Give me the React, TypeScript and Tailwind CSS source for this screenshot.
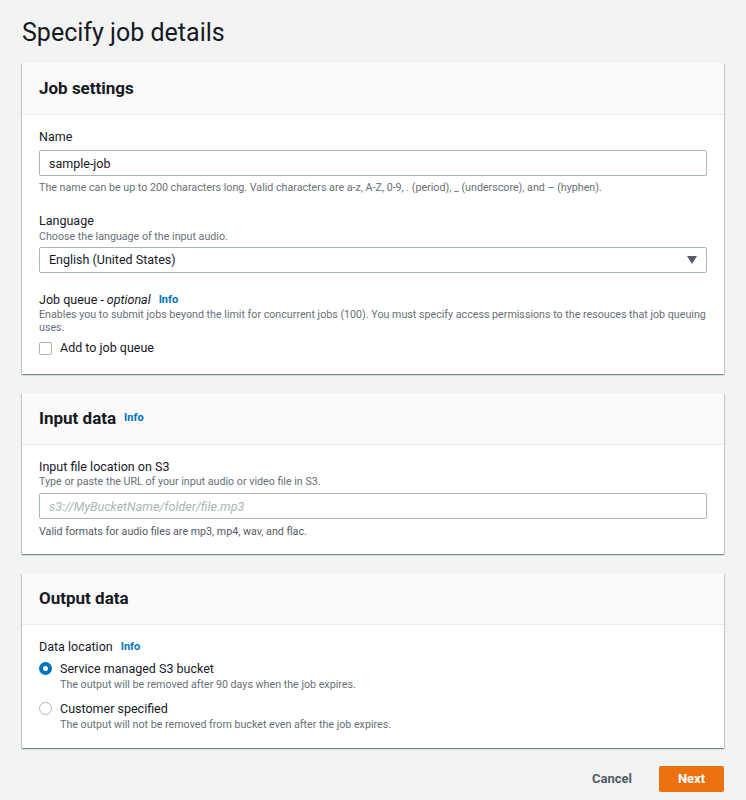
import { useState } from 'react';

function Info() {
  return <span className="ml-2 text-[11px] font-bold text-[#0073bb]">Info</span>;
}

function Card({ title, info, children, pb = 'pb-[16px]' }: { title: string; info?: boolean; children: React.ReactNode; pb?: string }) {
  return (
    <div className="bg-white shadow-[0_1px_1px_0_rgba(0,28,36,0.3),1px_1px_1px_0_rgba(0,28,36,0.15),-1px_1px_1px_0_rgba(0,28,36,0.15)]">
      <div className="h-[52px] flex items-center px-[17px] bg-[#fafafa] border-b border-[#eaeded]">
        <h2 className="text-[17px] font-bold text-[#16191f]">{title}</h2>
        {info && <Info />}
      </div>
      <div className={`px-[17px] pt-[13px] ${pb}`}>{children}</div>
    </div>
  );
}

const label = 'text-[12.5px] leading-[17px]';
const help = 'text-[10.7px] leading-[14px] text-[#687078]';

export default function App() {
  const [loc, setLoc] = useState<'service' | 'customer'>('service');
  const [queue, setQueue] = useState(false);

  return (
    <div className="min-h-[800px] bg-[#f2f3f3] px-[22px] pt-[17px] pb-[8px] text-[#16191f] font-['Roboto',sans-serif]">
      <h1 className="text-[25px] leading-[32px] mb-[14px]">Specify job details</h1>

      <div className="space-y-[19px]">
        <Card title="Job settings" pb="pb-[17px]">
          <div className={label}>Name</div>
          <input
            defaultValue="sample-job"
            className="mt-[5px] w-full h-[26px] border border-[#aab7b8] rounded-[2px] px-[9px] text-[12.5px] outline-none"
          />
          <p className={`mt-[5px] ${help}`}>
            The name can be up to 200 characters long. Valid characters are a-z, A-Z, 0-9, . (period), _ (underscore), and – (hyphen).
          </p>

          <div className={`mt-[17px] ${label}`}>Language</div>
          <p className={`mt-[1px] ${help}`}>Choose the language of the input audio.</p>
          <div className="mt-[3px] w-full h-[26px] border border-[#aab7b8] rounded-[2px] px-[9px] flex items-center justify-between text-[12.5px]">
            <span>English (United States)</span>
            <svg width="10" height="8" viewBox="0 0 10 8"><path d="M0 0h10L5 8z" fill="#545b64" /></svg>
          </div>

          <div className={`mt-[18px] flex items-center ${label}`}>
            Job queue - <i className="ml-[3px]">optional</i>
            <Info />
          </div>
          <p className="text-[10.7px] leading-[13px] text-[#687078]">
            Enables you to submit jobs beyond the limit for concurrent jobs (100). You must specify access permissions to the resouces that job queuing uses.
          </p>
          <label className="mt-[5px] h-[18px] flex items-center gap-[8px] text-[12.5px] cursor-pointer">
            <input type="checkbox" checked={queue} onChange={() => setQueue(!queue)} className="sr-only" />
            <span className="w-[13px] h-[13px] border border-[#aab7b8] rounded-[2px] bg-white" />
            Add to job queue
          </label>
        </Card>

        <Card title="Input data" info pb="pb-[15px]">
          <div className={label}>Input file location on S3</div>
          <p className={help}>Type or paste the URL of your input audio or video file in S3.</p>
          <input
            placeholder="s3://MyBucketName/folder/file.mp3"
            className="mt-[4px] w-full h-[26px] border border-[#aab7b8] rounded-[2px] px-[9px] text-[12.5px] italic placeholder:text-[#aab7b8] outline-none"
          />
          <p className="mt-[6px] text-[10.7px] leading-[14px] text-[#545b64]">Valid formats for audio files are mp3, mp4, wav, and flac.</p>
        </Card>

        <Card title="Output data">
          <div className={`flex items-center ${label}`}>Data location<Info /></div>
          <div className="mt-[5px] space-y-[8px]">
            {[
              { k: 'service' as const, label: 'Service managed S3 bucket', desc: 'The output will be removed after 90 days when the job expires.' },
              { k: 'customer' as const, label: 'Customer specified', desc: 'The output will not be removed from bucket even after the job expires.' },
            ].map((o) => (
              <div key={o.k} className="flex gap-[8px] cursor-pointer" onClick={() => setLoc(o.k)}>
                <span
                  className={
                    loc === o.k
                      ? 'mt-[2px] w-[13px] h-[13px] rounded-full border-[4px] border-[#0073bb] bg-white shrink-0'
                      : 'mt-[2px] w-[13px] h-[13px] rounded-full border border-[#aab7b8] bg-white shrink-0'
                  }
                />
                <div>
                  <div className="text-[12.5px] leading-[18px]">{o.label}</div>
                  <div className={help}>{o.desc}</div>
                </div>
              </div>
            ))}
          </div>
        </Card>
      </div>

      <div className="mt-[18px] flex justify-end items-center gap-[27px]">
        <button className="text-[13px] font-bold text-[#545b64]">Cancel</button>
        <button className="w-[65px] h-[26px] bg-[#ec7211] rounded-[2px] text-[13px] font-bold text-white">Next</button>
      </div>
    </div>
  );
}
